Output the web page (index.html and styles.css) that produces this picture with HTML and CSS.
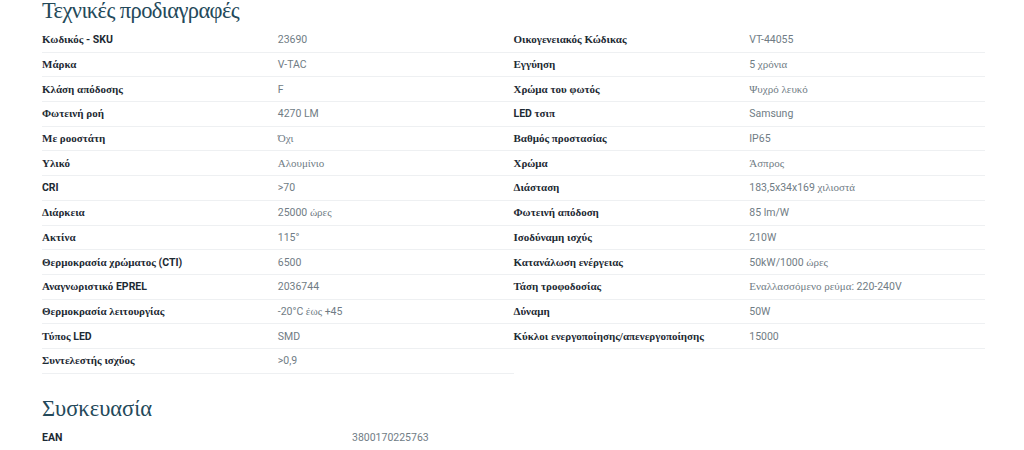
FILE: index.html
```html
<!DOCTYPE html>
<html lang="el">
<head>
<meta charset="utf-8">
<title>Τεχνικές προδιαγραφές</title>
<link rel="stylesheet" href="styles.css">
</head>
<body>
<main class="page">
  <section class="section">
    <h2 class="section-title specs-title">Τεχνικές προδιαγραφές</h2>
    <div class="spec-grid">
      <div class="spec-col">
        <div class="row"><span class="label"><span class="gr">Κωδικός</span> - SKU</span><span class="value">23690</span></div>
        <div class="row"><span class="label"><span class="gr">Μάρκα</span></span><span class="value">V-TAC</span></div>
        <div class="row"><span class="label"><span class="gr">Κλάση απόδοσης</span></span><span class="value">F</span></div>
        <div class="row"><span class="label"><span class="gr">Φωτεινή ροή</span></span><span class="value">4270 LM</span></div>
        <div class="row"><span class="label"><span class="gr">Με ροοστάτη</span></span><span class="value"><span class="gr">Όχι</span></span></div>
        <div class="row"><span class="label"><span class="gr">Υλικό</span></span><span class="value"><span class="gr">Αλουμίνιο</span></span></div>
        <div class="row"><span class="label">CRI</span><span class="value">&gt;70</span></div>
        <div class="row"><span class="label"><span class="gr">Διάρκεια</span></span><span class="value">25000 <span class="gr">ώρες</span></span></div>
        <div class="row"><span class="label"><span class="gr">Ακτίνα</span></span><span class="value">115°</span></div>
        <div class="row"><span class="label"><span class="gr">Θερμοκρασία χρώματος</span> (CTI)</span><span class="value">6500</span></div>
        <div class="row"><span class="label"><span class="gr">Αναγνωριστικό</span> EPREL</span><span class="value">2036744</span></div>
        <div class="row"><span class="label"><span class="gr">Θερμοκρασία λειτουργίας</span></span><span class="value">-20°C <span class="gr">έως</span> +45</span></div>
        <div class="row"><span class="label"><span class="gr">Τύπος</span> LED</span><span class="value">SMD</span></div>
        <div class="row"><span class="label"><span class="gr">Συντελεστής ισχύος</span></span><span class="value">&gt;0,9</span></div>
      </div>
      <div class="spec-col">
        <div class="row"><span class="label"><span class="gr">Οικογενειακός Κώδικας</span></span><span class="value">VT-44055</span></div>
        <div class="row"><span class="label"><span class="gr">Εγγύηση</span></span><span class="value">5 <span class="gr">χρόνια</span></span></div>
        <div class="row"><span class="label"><span class="gr">Χρώμα του φωτός</span></span><span class="value"><span class="gr">Ψυχρό λευκό</span></span></div>
        <div class="row"><span class="label">LED <span class="gr">τσιπ</span></span><span class="value">Samsung</span></div>
        <div class="row"><span class="label"><span class="gr">Βαθμός προστασίας</span></span><span class="value">IP65</span></div>
        <div class="row"><span class="label"><span class="gr">Χρώμα</span></span><span class="value"><span class="gr">Άσπρος</span></span></div>
        <div class="row"><span class="label"><span class="gr">Διάσταση</span></span><span class="value">183,5x34x169 <span class="gr">χιλιοστά</span></span></div>
        <div class="row"><span class="label"><span class="gr">Φωτεινή απόδοση</span></span><span class="value">85 lm/W</span></div>
        <div class="row"><span class="label"><span class="gr">Ισοδύναμη ισχύς</span></span><span class="value">210W</span></div>
        <div class="row"><span class="label"><span class="gr">Κατανάλωση ενέργειας</span></span><span class="value">50kW/1000 <span class="gr">ώρες</span></span></div>
        <div class="row"><span class="label"><span class="gr">Τάση τροφοδοσίας</span></span><span class="value"><span class="gr">Εναλλασσόμενο ρεύμα</span>: 220-240V</span></div>
        <div class="row"><span class="label"><span class="gr">Δύναμη</span></span><span class="value">50W</span></div>
        <div class="row"><span class="label"><span class="gr">Κύκλοι ενεργοποίησης/απενεργοποίησης</span></span><span class="value">15000</span></div>
      </div>
    </div>
  </section>
  <section class="section packaging">
    <h2 class="section-title">Συσκευασία</h2>
    <div class="pack-row"><span class="label">EAN</span><span class="value">3800170225763</span></div>
  </section>
</main>
</body>
</html>
```

FILE: styles.css
```css
html, body {
  margin: 0;
  padding: 0;
  background: #ffffff;
}

.page {
  padding: 0 39px 0 42px;
  font-family: Roboto, "Liberation Sans", sans-serif;
  font-size: 10.5px;
}

.gr {
  font-family: "Liberation Serif", serif;
  font-size: 11px;
}

.section-title {
  margin: 0 0 5.5px 0;
  font-family: "Liberation Serif", serif;
  font-weight: 400;
  font-size: 22.5px;
  line-height: 1;
  color: #24495a;
}

.specs-title {
  letter-spacing: -0.6px;
}

.spec-grid {
  display: grid;
  grid-template-columns: 1fr 1fr;
  align-items: start;
}

.spec-col {
  display: flex;
  flex-direction: column;
}

.row {
  display: grid;
  grid-template-columns: 1fr 1fr;
  align-items: center;
  height: 24.7px;
  box-sizing: border-box;
  border-bottom: 1px solid #eef0f2;
}

.label {
  font-weight: 700;
  color: #1d2a33;
}

.value {
  color: #707c85;
}

.packaging {
  margin-top: 24px;
}

.packaging .section-title {
  margin-bottom: 5px;
}

.pack-row {
  display: grid;
  grid-template-columns: 310px 1fr;
  align-items: center;
  height: 24.7px;
}
```
